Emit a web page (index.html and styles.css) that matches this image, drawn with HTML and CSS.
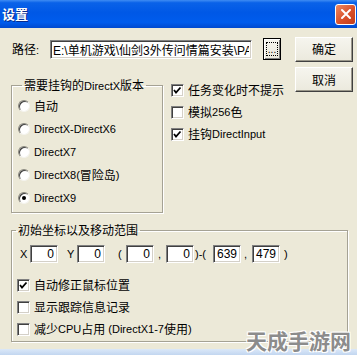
FILE: index.html
```html
<!DOCTYPE html>
<html lang="zh-CN">
<head>
    <meta charset="UTF-8">
    <meta name="viewport" content="width=device-width, initial-scale=1.0">
    <title>设置</title>
    <link rel="stylesheet" href="styles.css">
</head>
<body>
    <div class="janela">
        <div class="titulo">
            <span class="titulo-texto">设置</span>
            <span class="fechar">
                <svg width="12" height="12" viewBox="0 0 12 12"><path d="M2 2 L10 10 M10 2 L2 10" stroke="#fff" stroke-width="2" stroke-linecap="round"/></svg>
            </span>
        </div>

        <div class="linha-caminho">
            <span class="rotulo-caminho">路径<span class="lat">:</span></span>
            <input class="campo campo-caminho" type="text" value="E:\单机游戏\仙剑3外传问情篇安装\PAL3A" readonly>
            <span class="botao botao-procurar"><span class="foco">...</span></span>
            <span class="botao botao-ok">确定</span>
        </div>

        <div class="linha-meio">
            <fieldset class="grupo grupo-dx">
                <legend>需要挂钩的<span class="lat">DirectX</span>版本</legend>
                <div class="opcao"><span class="radio"></span>自动</div>
                <div class="opcao"><span class="radio"></span><span class="lat">DirectX-DirectX6</span></div>
                <div class="opcao"><span class="radio"></span><span class="lat">DirectX7</span></div>
                <div class="opcao"><span class="radio"></span><span class="lat">DirectX8(</span>冒险岛<span class="lat">)</span></div>
                <div class="opcao"><span class="radio marcado"></span><span class="lat">DirectX9</span></div>
            </fieldset>
            <div class="coluna-checks">
                <div class="opcao-check"><span class="check marcado"></span>任务变化时不提示</div>
                <div class="opcao-check"><span class="check"></span>模拟<span class="lat">256</span>色</div>
                <div class="opcao-check"><span class="check marcado"></span>挂钩<span class="lat">DirectInput</span></div>
            </div>
            <span class="botao botao-cancelar">取消</span>
        </div>

        <fieldset class="grupo grupo-coord">
            <legend>初始坐标以及移动范围</legend>
            <div class="linha-coord">
                <span class="sep sep-x">X</span>
                <input class="campo campo-num" type="text" value="0" readonly>
                <span class="sep sep-y">Y</span>
                <input class="campo campo-num" type="text" value="0" readonly>
                <span class="sep sep-abre">(</span>
                <input class="campo campo-num" type="text" value="0" readonly>
                <span class="sep sep-virgula">,</span>
                <input class="campo campo-num" type="text" value="0" readonly>
                <span class="sep sep-meio">)-(</span>
                <input class="campo campo-num" type="text" value="639" readonly>
                <span class="sep sep-virgula2">,</span>
                <input class="campo campo-num" type="text" value="479" readonly>
                <span class="sep sep-fecha">)</span>
            </div>
            <div class="opcoes-baixo">
                <div class="opcao-check"><span class="check marcado"></span>自动修正鼠标位置</div>
                <div class="opcao-check"><span class="check"></span>显示跟踪信息记录</div>
                <div class="opcao-check"><span class="check"></span>减少<span class="lat">CPU</span>占用<span class="lat">&nbsp;(DirectX1-7</span>使用<span class="lat">)</span></div>
            </div>
        </fieldset>

        <div class="borda-baixo"></div>
        <div class="marca">天成手游网</div>
    </div>
</body>
</html>
```

FILE: styles.css
```css
*{
    box-sizing: border-box;
    font-family: "Noto Sans CJK SC", "Noto Sans", sans-serif;
}
body{
    margin: 0;
    background-color: #ece9d8;
}
.janela{
    position: relative;
    width: 357px;
    height: 355px;
    overflow: hidden;
    background-color: #ece9d8;
    font-size: 12px;
    line-height: 14px;
    color: #000;
}
.lat, .sep, .campo{
    font-family: "Liberation Sans", "Noto Sans CJK SC", sans-serif;
}
.lat, .sep{
    font-size: 11px;
}
.titulo{
    height: 28px;
    display: flex;
    justify-content: space-between;
    align-items: center;
    padding: 0 1px 0 2px;
    background: linear-gradient(to bottom, #3f8cf3 0%, #0a62e8 10%, #0058e6 45%, #005ced 80%, #0049cf 100%);
}
.titulo-texto{
    color: #fff;
    font-weight: bold;
    font-size: 13px;
    text-shadow: 1px 1px 0 #0a2a8a;
}
.fechar{
    width: 21px;
    height: 21px;
    display: flex;
    align-items: center;
    justify-content: center;
    border: 1px solid #fff;
    border-radius: 3px;
    background: linear-gradient(to bottom right, #ee8a63, #d9502a 55%, #c23d1c);
}

/* linha do caminho */
.linha-caminho{
    display: flex;
    align-items: center;
    height: 26px;
    margin-top: 8px;
    padding-left: 12px;
}
.rotulo-caminho{
    width: 38px;
}
.campo{
    height: 19px;
    border: 1px solid;
    border-color: #808080 #fff #fff #808080;
    box-shadow: inset 1px 1px 0 #404040, inset -1px -1px 0 #d4d0c8;
    background-color: #fff;
    font-size: 12px;
    padding: 0 2px;
    outline: none;
    color: #000;
}
.campo-caminho{
    width: 202px;
    padding-left: 2px;
}
.botao{
    display: flex;
    align-items: center;
    justify-content: center;
    border: 1px solid;
    border-color: #fff #404040 #404040 #fff;
    box-shadow: inset -1px -1px 0 #9a978a;
    background: linear-gradient(to bottom, #f6f5ee, #ebe9dd);
}
.botao-procurar{
    width: 18px;
    height: 22px;
    margin-left: 11px;
    border-color: #000;
    box-shadow: inset 1px 1px 0 #fff, inset -1px -1px 0 #808080;
}
.foco{
    width: 12px;
    height: 14px;
    border: 1px dotted #000;
    display: flex;
    align-items: flex-end;
    justify-content: center;
    font-family: "Liberation Sans", sans-serif;
    font-size: 10px;
    line-height: 10px;
}
.botao-ok{
    width: 58px;
    height: 25px;
    margin-left: 14px;
}

/* linha do meio */
.linha-meio{
    display: flex;
    align-items: flex-start;
    margin-top: 4px;
}
.grupo{
    margin: 0;
    border: 1px solid #a5a294;
    box-shadow: 1px 1px 0 #fff, inset 1px 1px 0 #fff;
}
.grupo legend{
    padding: 0 2px;
    margin-left: 4px;
    line-height: 14px;
}
.grupo-dx{
    width: 152px;
    height: 135px;
    margin-left: 11px;
    margin-top: 12px;
    padding: 1px 0 0 6px;
}
.opcao{
    display: flex;
    align-items: center;
    height: 23px;
}
.radio{
    width: 12px;
    height: 12px;
    margin-right: 4px;
    border-radius: 50%;
    background-color: #fff;
    border: 1px solid;
    border-color: #8a887e #f4f3ee #f4f3ee #8a887e;
    box-shadow: inset 1px 1px 0 #404040;
    display: flex;
    align-items: center;
    justify-content: center;
}
.radio.marcado::after{
    content: "";
    width: 4px;
    height: 4px;
    border-radius: 50%;
    background-color: #000;
}
.coluna-checks{
    margin-left: 8px;
    margin-top: 13px;
}
.opcao-check{
    display: flex;
    align-items: center;
    height: 22px;
}
.check{
    width: 13px;
    height: 13px;
    margin-right: 4px;
    background-color: #fff;
    border: 1px solid;
    border-color: #808080 #fff #fff #808080;
    box-shadow: inset 1px 1px 0 #404040, inset -1px -1px 0 #d4d0c8;
}
.check.marcado{
    background: #fff url("data:image/svg+xml,%3Csvg xmlns='http://www.w3.org/2000/svg' width='11' height='11'%3E%3Cpath d='M2 5 L4 7.5 L8.5 2.5' fill='none' stroke='%23000' stroke-width='1.8'/%3E%3C/svg%3E") center no-repeat;
}
.botao-cancelar{
    width: 58px;
    height: 25px;
    margin-left: auto;
    margin-right: 4px;
    margin-top: 1px;
}

/* grupo de coordenadas */
.grupo-coord{
    width: 337px;
    height: 119px;
    margin-left: 11px;
    margin-top: 10px;
    padding: 6px 0 0 0;
}
.linha-coord{
    display: flex;
    align-items: center;
    height: 22px;
    padding-left: 8px;
}
.campo-num{
    width: 28px;
    height: 18px;
    text-align: right;
    padding: 0 3px 0 0;
}
.sep-x{ width: 10px; }
.sep-y{ width: 19px; padding-left: 9px; }
.sep-abre{ width: 21px; padding-left: 13px; }
.sep-virgula{ width: 12px; padding-left: 4px; }
.sep-meio{ width: 19px; padding-left: 1px; }
.sep-virgula2{ width: 11px; padding-left: 3px; }
.sep-fecha{ padding-left: 4px; }
.opcoes-baixo{
    margin-top: 9px;
    padding-left: 5px;
}
.borda-baixo{
    margin-top: 7px;
    height: 6px;
    background: linear-gradient(to bottom, #dbe8f8, #c2d6f0);
}
.marca{
    position: absolute;
    right: 6px;
    bottom: 2px;
    font-size: 21px;
    font-weight: bold;
    line-height: 26px;
    color: #8c8c8c;
    text-shadow: -1px -1px 0 #fff, 1px -1px 0 #fff, -1px 1px 0 #fff, 1px 1px 0 #fff;
}
```
